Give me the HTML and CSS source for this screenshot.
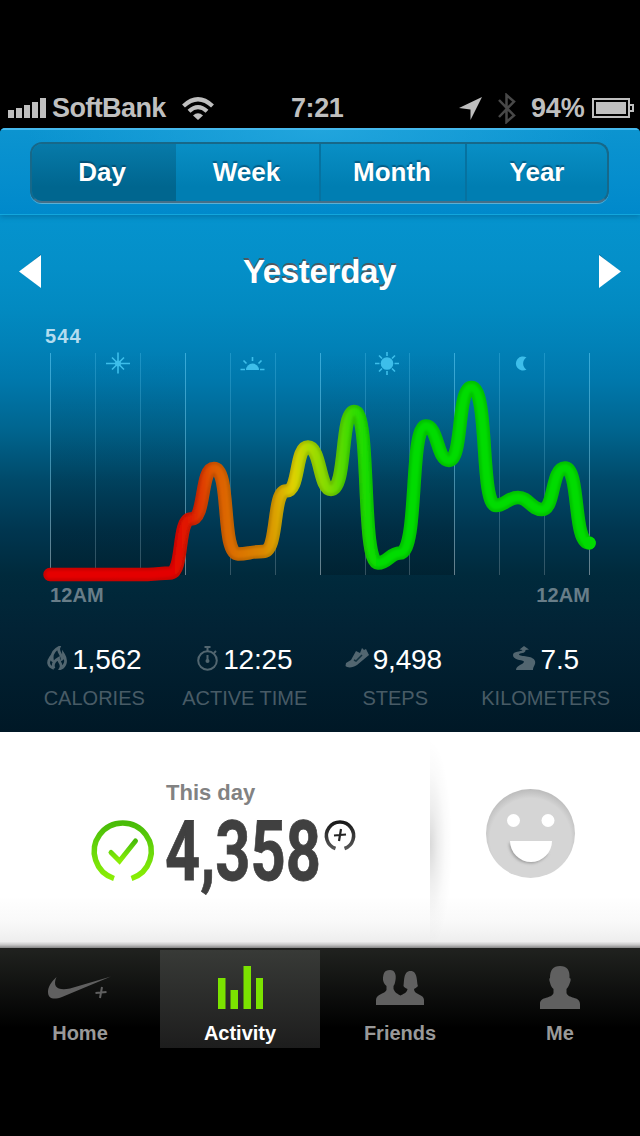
FILE: index.html
```
<!DOCTYPE html>
<html lang="en">
<head>
  <meta charset="UTF-8">
  <meta name="viewport" content="width=device-width, initial-scale=1.0">
  <title>Activity</title>
  <link rel="stylesheet" href="styles.css">
</head>
<body>
  <div class="status">
    <svg class="signal" width="38" height="20" viewBox="0 0 38 20"><path d="M0 12h6v8H0zM8 10h6v10H8zM16 7h6v13h-6zM24 4h6v16h-6zM32 0h6v20h-6z"/></svg>
    <span class="carrier">SoftBank</span>
    <svg class="wifi" width="32" height="23" viewBox="0 0 32 23">
      <path class="arc" d="M1.500 9Q16-4.500 30.500 9M7 14.200Q16 6 25 14.200"/>
      <path d="M11 18.500Q16 14 21 18.500L16 23z"/>
    </svg>
    <span class="time">7:21</span>
    <svg class="location" width="23" height="23" viewBox="0 0 23 23"><path d="M23 0L11.500 23V12.500L0 11z"/></svg>
    <svg class="bluetooth" width="18" height="31" viewBox="0 0 18 31"><path d="M1 7L16 22.500L8.500 29V2L16 8.500L1 24"/></svg>
    <span class="charge">94%</span>
    <svg class="battery" width="42" height="20" viewBox="0 0 42 20">
      <path class="shell" d="M1 1h36v18H1zM38 7h3v6h-3"/>
      <path d="M4 4h30v12H4z"/>
    </svg>
  </div>

  <div class="panel">
    <div class="header">
      <div class="tabs">
        <span class="tab selected">Day</span>
        <span class="tab">Week</span>
        <span class="tab">Month</span>
        <span class="tab">Year</span>
      </div>
    </div>

    <div class="date">
      <svg width="22" height="34" viewBox="0 0 22 34"><path class="edge" d="M22 0v4L2 17z"/><path d="M22 1v33L0 17.500z"/></svg>
      <h1>Yesterday</h1>
      <svg width="22" height="34" viewBox="0 0 22 34"><path class="edge" d="M0 0v4l20 13z"/><path d="M0 1v33l22-16.500z"/></svg>
    </div>

    <div class="max">544</div>
    <svg class="chart" width="640" height="236" viewBox="0 350 640 236">
      <defs>
        <linearGradient id="heat" gradientUnits="userSpaceOnUse" x1="50" y1="0" x2="590" y2="0">
          <stop offset="0" stop-color="#e60000"/>
          <stop offset=".23" stop-color="#e30500"/>
          <stop offset=".265" stop-color="#df2200"/>
          <stop offset=".3" stop-color="#df5800"/>
          <stop offset=".34" stop-color="#db6f00"/>
          <stop offset=".395" stop-color="#db8700"/>
          <stop offset=".425" stop-color="#dbab00"/>
          <stop offset=".45" stop-color="#dfd100"/>
          <stop offset=".48" stop-color="#abdc00"/>
          <stop offset=".52" stop-color="#79da00"/>
          <stop offset=".56" stop-color="#35dc00"/>
          <stop offset=".61" stop-color="#00dc00"/>
        </linearGradient>
        <linearGradient id="shade" x1="0" y1="0" x2="0" y2="1">
          <stop offset="0" stop-color="#001824" stop-opacity="0"/>
          <stop offset=".5" stop-color="#001824" stop-opacity=".13"/>
          <stop offset="1" stop-color="#001824" stop-opacity=".4"/>
        </linearGradient>
        <linearGradient id="line" gradientUnits="userSpaceOnUse" x1="0" y1="353" x2="0" y2="575">
          <stop offset="0" stop-color="#45b6e3"/>
          <stop offset=".5" stop-color="#4f9fbd"/>
          <stop offset="1" stop-color="#81959f"/>
        </linearGradient>
        <filter id="soft" filterUnits="userSpaceOnUse" x="30" y="350" width="580" height="240"><feGaussianBlur stdDeviation="1.200"/></filter>
        <path id="curve" d="M50 574.500H148C158 574.500 161 573 170 573C184 573 177 519 191 519C206 519 200 468.500 214 468.500C231 468.500 221 554 238 554C248 554 251 551.500 263 551.500C279 551.500 272 491 286 491C300 491 295 447 308 447C321 447 319 489.500 331 489.500C347 489.500 340 411.500 354.500 411.500C371 411.500 361 563 378 563C388 563 390 553 400 553C419 553 409 426 426 426C438 426 437 460.500 449 460.500C463 460.500 457 387.500 471.500 387.500C489 387.500 480 505.500 496 505.500C505 505.500 508 497.500 518 497.500C529 497.500 531 509.500 542 509.500C555 509.500 551 468 565 468C580 468 573 543 589 543"/>
      </defs>
      <path fill="url(#shade)" d="M51 353h134v222H51zM321 353h133v222H321z"/>
      <g stroke="url(#line)">
        <path class="major" d="M50.500 353l.01 222M185.500 353l.01 222M320.500 353l.01 222M454.500 353l.01 222M589.500 353l.01 222"/>
        <path class="minor" d="M95.500 353l.01 222M140.500 353l.01 222M230.500 353l.01 222M275.500 353l.01 222M365.500 353l.01 222M409.500 353l.01 222M499.500 353l.01 222M544.500 353l.01 222"/>
      </g>
      <!-- night, dawn, noon, evening -->
      <g class="parts">
        <path class="ray" d="M118 352.500v21M106 363.500h24M112 357.500l12 12M124 357.500l-12 12"/>
        <circle cx="118" cy="363.500" r="3"/>
        <path d="M246 370a6.500 6.500 0 0 1 13 0z"/>
        <path class="ray" d="M240.500 369.500h4.500M260 369.500h4.500M252.500 357v4M243.500 360.500l3 3M261.500 360.500l-3 3"/>
        <circle cx="387" cy="363.500" r="6.300"/>
        <path class="ray" d="M387 352v4M387 371v4M375 363.500h4.500M394.500 363.500h4.500M379 355.500l3 3M395 355.500l-3 3M379 371.500l3-3M395 371.500l-3-3"/>
        <path d="M526.500 357.500a7 7 0 1 0 0 12a7 7 0 0 1 0-12z"/>
      </g>
      <use href="#curve" class="curve" stroke="url(#heat)"/>
      <use href="#curve" class="curve dim"/>
      <use href="#curve" class="curve core" stroke="url(#heat)" filter="url(#soft)"/>
      <circle cx="589.500" cy="543" r="6.300" fill="#00dc00"/>
    </svg>
    <div class="hours"><span>12AM</span><span>12AM</span></div>

    <div class="stats">
      <div class="stat">
        <div class="value">
          <svg width="20" height="24" viewBox="0 0 20 24"><path class="stroke flame" d="M7 22.500C0 20 1 15 3.500 11.500C4 13.500 4.500 14 5.500 14.500C4 8 7 4 12 1.500C10 6 15.500 9 15 13C16.500 12 16.500 10 16.500 8.500C20 14 19 20 13.500 22.500C16 18 11.500 17 11.500 12.500C7 15 5 18 7 22.500"/></svg>
          <span>1,562</span>
        </div>
        <div class="label">CALORIES</div>
      </div>
      <div class="stat">
        <div class="value">
          <svg width="21" height="25" viewBox="0 0 21 25"><circle class="stroke" cx="10.500" cy="14.500" r="9.300"/><path class="stroke" d="M7.500 1h6M10.500 1v4M17 7l2-2M10.500 9v5"/><circle cx="10.500" cy="15" r="2"/></svg>
          <span>12:25</span>
        </div>
        <div class="label">ACTIVE TIME</div>
      </div>
      <div class="stat">
        <div class="value steps">
          <svg width="24" height="24" viewBox="0 0 24 24"><path d="M1 17L6 14L11 5L15 7L17 2L19 4L21 3L24 9L18 14L12 19C8 22 2 22 .5 20z"/><path class="mark" d="M9 14l2 1l6-6"/></svg>
          <span>9,498</span>
        </div>
        <div class="label">STEPS</div>
      </div>
      <div class="stat">
        <div class="value">
          <svg width="23" height="24" viewBox="0 0 23 24"><path d="M11 0L16 3.500L12.500 4C13 8 6 6.500 6 8.500C7 11 20 9 22 15C23 19 20 20 20 24H3C3 19 11 18.500 11 15.500C8 13.500 0 14 0 9C0 5 8 6 9.500 4L6.500 3.500z"/></svg>
          <span>7.5</span>
        </div>
        <div class="label">KILOMETERS</div>
      </div>
    </div>
  </div>

  <div class="summary">
    <div class="fuel">
      <h2>This day</h2>
      <svg class="points" width="270" height="90" viewBox="88 814 270 90">
        <defs>
          <linearGradient id="lime" x1="0" y1="0" x2="0" y2="1"><stop offset="0" stop-color="#48bb08"/><stop offset=".5" stop-color="#69d80a"/><stop offset="1" stop-color="#8aee05"/></linearGradient>
          <linearGradient id="ink" x1="0" y1="0" x2="0" y2="1"><stop offset="0" stop-color="#191919"/><stop offset="1" stop-color="#555"/></linearGradient>
        </defs>
        <path class="ring" stroke="url(#lime)" d="M114 878.500A28.500 28.500 0 1 1 131.500 878.500"/>
        <path class="check" stroke="url(#lime)" d="M111 852.500l8.500 8.500l16-20"/>
        <text x="165" y="880" textLength="156" lengthAdjust="spacingAndGlyphs">4,358</text>
        <path class="plus-ring" stroke="url(#ink)" d="M335.500 848.500A13.600 13.600 0 1 1 344.500 848.500"/>
        <path class="plus" d="M341 829l-2 12M334 835.500l12-1"/>
      </svg>
    </div>
    <div class="mood">
      <svg width="90" height="90" viewBox="0 0 90 90">
        <defs>
          <radialGradient id="face" cx=".5" cy=".56" r=".57"><stop offset=".8" stop-color="#d5d5d5"/><stop offset="1" stop-color="#b8b8b8"/></radialGradient>
          <filter id="cut" x="-20%" y="-20%" width="140%" height="150%"><feGaussianBlur stdDeviation="1.500"/></filter>
        </defs>
        <circle cx="44.500" cy="44.500" r="44.500" fill="url(#face)"/>
        <path class="mouth-shade" filter="url(#cut)" d="M23 54a21 21 0 0 0 39 10z"/>
        <g fill="#fff"><circle cx="27.500" cy="31.500" r="6.500"/><circle cx="62" cy="31.500" r="6.500"/><path d="M24 52h42a21 21 0 0 1-42 0z"/></g>
      </svg>
    </div>
  </div>

  <div class="nav">
    <div class="item">
      <svg width="64" height="44" viewBox="0 0 64 44"><path d="M8.500 11C3 16 0 21 0 26C0 33 6 34 14 31L63 10.500L22 22.500C10 25 4 21 8.500 11z"/><path class="stroke" d="M54 21l-2 11M47.500 27l11-1"/></svg>
      <span>Home</span>
    </div>
    <div class="item current">
      <svg width="46" height="44" viewBox="0 0 46 44"><path d="M1 12h7.500v31H1zM13.500 24H21v19h-7.500zM26.500 0H34v43h-7.500zM39 12h7v31h-7z"/></svg>
      <span>Activity</span>
    </div>
    <div class="item">
      <svg width="48" height="44" viewBox="0 0 48 44"><path d="M0 39V34C0 28 9 28 10.500 24V20C8 18 7.500 16 7 14C7 8 8 4 14 4C19 4 20.500 9 19.500 14C19 17 18.500 19 17.500 20V23C19 27 22 28 24.500 29.500C27 28 31 27 31.500 23C29 22 28 21 27.500 20C28.500 16 27 5 34.500 5C42 5 40.500 16 42 20C41 21 40 22 38 23C38 29 48 28 48 34V39z"/></svg>
      <span>Friends</span>
    </div>
    <div class="item">
      <svg width="40" height="44" viewBox="0 0 40 44"><path d="M0 43V38C0 30 12 33 13.500 27V23C10.500 20 10.500 18 9.500 15C9 13 9.500 12 10 12C10 4 13 0 20 0C27 0 30 4 29.500 12C30.500 12 31 13 30.500 15C29.500 18 29 20 26.500 23V27C28 33 40 30 40 38V43z"/></svg>
      <span>Me</span>
    </div>
  </div>
</body>
</html>
```
FILE: styles.css
```
* {
  box-sizing: border-box;
}

body {
  margin: 0;
  width: 640px;
  height: 1136px;
  overflow: hidden;
  padding-top: 88px;
  background: #000;
  font-family: "Liberation Sans", Arial, sans-serif;
}

svg {
  display: block;
  flex: none;
}

h1, h2 {
  margin: 0;
}

/* status bar */
.status {
  display: flex;
  align-items: center;
  height: 40px;
  padding: 0 6px 0 8px;
  color: #bfbfbf;
  fill: #bfbfbf;
  font-size: 27px;
  font-weight: bold;
  line-height: 40px;
}

.signal {
  margin-right: 6px;
}

.carrier {
  width: 114px;
  letter-spacing: -.6px;
}

.wifi {
  margin-left: 16px;
}

.arc {
  fill: none;
  stroke: #bfbfbf;
  stroke-width: 4.2;
}

.time {
  width: 54px;
  margin-left: 77px;
  letter-spacing: -.4px;
}

.location {
  margin-left: 114px;
}

.bluetooth {
  margin-left: 16px;
  fill: none;
  stroke: #484848;
  stroke-width: 2.5;
}

.charge {
  margin-left: 15px;
  width: 54px;
  letter-spacing: -.2px;
}

.battery {
  margin-left: auto;
}

.shell {
  fill: none;
  stroke: #bfbfbf;
  stroke-width: 2;
}

/* blue panel */
.panel {
  height: 604px;
  border-radius: 5px 5px 0 0;
  overflow: hidden;
  background: linear-gradient(#0593ce 87px, #048fc8 140px, #028ac1 180px, #0181b7 220px, #0078ac 252px, #00658f 302px, #004a6a 352px, #003650 402px, #002a3c 447px, #022335 500px, #001826 604px);
}

.header {
  height: 87px;
  padding: 12px 31px 0 30px;
  border-top: 2px solid #45b9ee;
  border-bottom: 1px solid #12a6dc;
  background: radial-gradient(ellipse at 50% 0, rgba(38, 169, 224, .8), rgba(0, 145, 209, 0) 65%), linear-gradient(#0c94d0, #0089cb);
  box-shadow: 0 2px 5px rgba(0, 70, 110, .35);
}

.tabs {
  display: grid;
  grid-template-columns: 144px 145px 146px 1fr;
  height: 61px;
  border: 2px solid #176889;
  border-bottom-color: #456f88;
  border-radius: 12px;
  overflow: hidden;
  background: linear-gradient(#098fc5, #007eb2 75%);
  box-shadow: 0 1px 0 #5ab0d5;
}

.tab {
  padding-right: 2px;
  color: #fff;
  font-size: 26px;
  font-weight: bold;
  line-height: 57px;
  text-align: center;
  border-right: 2px solid #0672a0;
  text-shadow: 0 -2px 1px rgba(0, 50, 80, .5);
}

.tab:last-child {
  padding-right: 0;
  border-right: 0;
}

.selected {
  background: linear-gradient(#077aa9, #00668f 75%);
  border-right-color: transparent;
}

.date {
  display: flex;
  align-items: center;
  justify-content: space-between;
  height: 112px;
  padding: 0 19px;
  fill: #fff;
}

.date h1 {
  padding: 2px 1px 0 0;
  color: #fff;
  font-size: 33px;
  line-height: 40px;
  letter-spacing: -.3px;
  text-shadow: 0 -2px 0 #505860;
}

.edge {
  fill: #086b98;
}

.max {
  height: 23px;
  padding-left: 45px;
  color: #b3dcef;
  font-size: 20px;
  line-height: 18px;
  font-weight: bold;
  letter-spacing: 1.1px;
}

.major {
  opacity: .8;
}

.minor {
  opacity: .4;
}

.parts {
  fill: #3dbeea;
}

.ray {
  fill: none;
  stroke: #3dbeea;
  stroke-width: 1.6;
}

.curve {
  fill: none;
  stroke-width: 13.4;
  stroke-linecap: round;
  stroke-linejoin: round;
}

.dim {
  stroke: rgba(0, 0, 0, .12);
}

.core {
  stroke-width: 8;
}

.hours {
  display: flex;
  justify-content: space-between;
  height: 56px;
  padding: 0 50px 0 50px;
  color: #687d88;
  font-size: 20px;
  font-weight: bold;
  line-height: 19px;
  letter-spacing: .1px;
}

.stats {
  display: grid;
  grid-template-columns: repeat(4, 150.5px);
  padding-left: 19px;
  text-align: center;
}

.value {
  display: flex;
  justify-content: center;
  align-items: center;
  gap: 5px;
  height: 36px;
  color: #fff;
  fill: #526670;
  font-size: 28px;
  letter-spacing: -.2px;
}

.value svg {
  margin-top: -4px;
}

.value .stroke {
  fill: none;
  stroke: #526670;
  stroke-width: 2;
}

.value .flame {
  stroke-width: 2.8;
}

.steps {
  gap: 4px;
  padding-right: 4px;
}

.mark {
  fill: none;
  stroke: #12303e;
  stroke-width: 1.5;
}

.label {
  color: #485b66;
  font-size: 20px;
  line-height: 40px;
  white-space: nowrap;
}

/* daily total */
.summary {
  display: flex;
  height: 216px;
  background: linear-gradient(rgba(255, 255, 255, 0) 76%, #f9f9f9 88%, #eee 97%, #c8c8c8 98.5%, #858585), #fff;
}

.fuel {
  width: 430px;
  padding: 47px 0 0 88px;
}

.fuel h2 {
  padding-left: 78px;
  color: #828282;
  font-size: 22px;
  line-height: 28px;
}

.points {
  margin-top: 7px;
  overflow: visible;
}

.points text {
  fill: #404040;
  stroke: #404040;
  stroke-width: .8;
  font-family: Roboto, "Liberation Sans", sans-serif;
  font-size: 84px;
  font-weight: bold;
}

.ring, .check, .plus-ring, .plus {
  fill: none;
  stroke-width: 5.5;
}

.check {
  stroke-width: 5;
  stroke-linecap: round;
}

.plus-ring {
  stroke-width: 3.5;
}

.plus {
  stroke: #222;
  stroke-width: 2.2;
}

.mood {
  flex: 1;
  padding: 57px 0 0 56px;
  background: radial-gradient(ellipse 22px 105px at 0 52%, rgba(0, 0, 0, .15), rgba(0, 0, 0, .07) 35%, rgba(0, 0, 0, .02) 70%, rgba(0, 0, 0, 0));
}

.mouth-shade {
  fill: #999;
}

/* bottom navigation */
.nav {
  display: grid;
  grid-template-columns: repeat(4, 160px);
  height: 100px;
  padding-top: 2px;
  background: linear-gradient(#20221f, #000 80%);
}

.item {
  display: flex;
  flex-direction: column;
  align-items: center;
  padding-top: 16px;
  color: #999;
  fill: #606060;
  font-size: 20px;
  font-weight: bold;
  line-height: 24px;
}

.item span {
  margin-top: 11px;
}

.item .stroke {
  stroke: #606060;
  stroke-width: 2;
}

.current {
  background: linear-gradient(#383a37, #1d1d1d);
  color: #fff;
  fill: #7be300;
}
```
